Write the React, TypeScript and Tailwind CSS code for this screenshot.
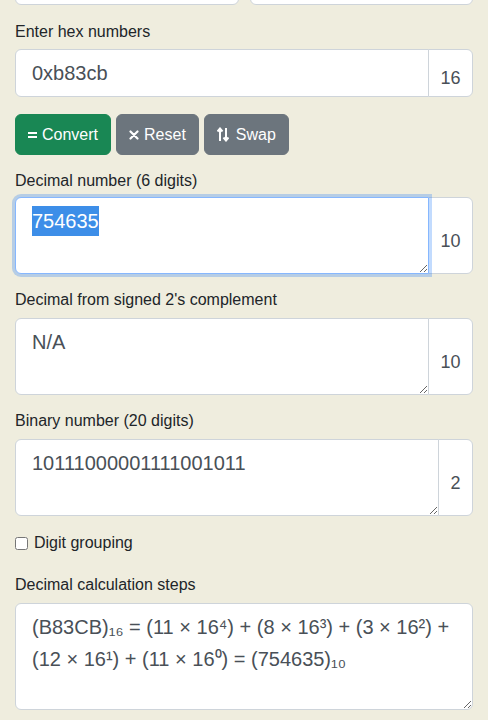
import { useEffect, useRef } from 'react'

const FONT = { fontFamily: '"Liberation Sans", Arial, sans-serif' }

function EqIcon() {
  return (
    <svg width="9" height="10" viewBox="0 0 9 10" className="shrink-0">
      <rect x="0" y="2" width="9" height="2" fill="currentColor" />
      <rect x="0" y="6" width="9" height="2" fill="currentColor" />
    </svg>
  )
}

function XIcon() {
  return (
    <svg width="10" height="10" viewBox="0 0 10 10" className="shrink-0">
      <path d="M1.5 1.5 8.5 8.5 M8.5 1.5 1.5 8.5" stroke="currentColor" strokeWidth="2.2" strokeLinecap="round" />
    </svg>
  )
}

function SwapIcon() {
  return (
    <svg width="12" height="15" viewBox="0 0 12 15" className="shrink-0">
      <path d="M3 14V2 M0.5 4.5 3 1.5 5.5 4.5" stroke="currentColor" strokeWidth="2" fill="none" />
      <path d="M9 1v12 M6.5 10.5 9 13.5 11.5 10.5" stroke="currentColor" strokeWidth="2" fill="none" />
    </svg>
  )
}

function Addon({ children, narrow }: { children: React.ReactNode; narrow?: boolean }) {
  return (
    <div
      className={`flex items-center justify-center pt-[11px] -ml-px bg-white border border-[#ced4da] rounded-r-[6px] text-[18px] text-[#495057] ${
        narrow ? 'w-[35px]' : 'w-[45px]'
      }`}
    >
      {children}
    </div>
  )
}

export default function App() {
  const decRef = useRef<HTMLTextAreaElement>(null)

  useEffect(() => {
    const el = decRef.current
    if (el) {
      el.focus()
      el.setSelectionRange(0, 6)
    }
  }, [])

  const steps =
    '(B83CB)₁₆ = (11 × 16⁴) + (8 × 16³) + (3 × 16²) + (12 × 16¹) + (11 × 16⁰) = (754635)₁₀'

  return (
    <div className="min-h-[720px] bg-[#efedde] px-[15px] pb-4 overflow-hidden" style={FONT}>
      {/* cut-off selects */}
      <div className="flex gap-[11px] -mt-[35px]">
        <div className="flex-1 h-[40px] bg-white border border-[#ced4da] rounded-[6px]" />
        <div className="flex-1 h-[40px] bg-white border border-[#ced4da] rounded-[6px]" />
      </div>

      <label className="block mt-[15px] mb-[5px] text-[16px] leading-6 text-[#212529]">Enter hex numbers</label>
      <div className="flex">
        <input
          readOnly
          value="0xb83cb"
          className="flex-1 min-w-0 h-[48px] px-4 bg-white border border-[#ced4da] rounded-l-[6px] text-[20px] text-[#495057] outline-none"
          style={FONT}
        />
        <Addon>16</Addon>
      </div>

      <div className="flex gap-[5px] mt-[17px]">
        <button className="flex items-center gap-[5px] h-[41px] px-3 rounded-[6px] border border-[#198754] bg-[#198754] text-white text-[16px]">
          <EqIcon />
          Convert
        </button>
        <button className="flex items-center gap-[5px] h-[41px] px-3 rounded-[6px] border border-[#6c757d] bg-[#6c757d] text-white text-[16px]">
          <XIcon />
          Reset
        </button>
        <button className="flex items-center gap-[7px] h-[41px] px-3 rounded-[6px] border border-[#6c757d] bg-[#6c757d] text-white text-[16px]">
          <SwapIcon />
          Swap
        </button>
      </div>

      <label className="block mt-[14px] mb-[4px] text-[16px] leading-6 text-[#212529]">Decimal number (6 digits)</label>
      <div className="flex">
        <textarea
          ref={decRef}
          readOnly
          defaultValue="754635"
          className="relative z-10 flex-1 min-w-0 h-[77px] px-4 pt-[8px] bg-white border border-[#86b7fe] rounded-l-[6px] text-[20px] leading-[30px] text-[#495057] outline-none shadow-[0_0_0_3px_rgba(13,110,253,0.25)] selection:bg-[#3d8ee8] selection:text-white"
          style={FONT}
        />
        <Addon>10</Addon>
      </div>

      <label className="block mt-[14px] mb-[6px] text-[16px] leading-6 text-[#212529]">Decimal from signed 2's complement</label>
      <div className="flex">
        <textarea
          readOnly
          defaultValue="N/A"
          className="flex-1 min-w-0 h-[77px] px-4 pt-[8px] bg-white border border-[#ced4da] rounded-l-[6px] text-[20px] leading-[30px] text-[#495057] outline-none"
          style={FONT}
        />
        <Addon>10</Addon>
      </div>

      <label className="block mt-[14px] mb-[6px] text-[16px] leading-6 text-[#212529]">Binary number (20 digits)</label>
      <div className="flex">
        <textarea
          readOnly
          defaultValue="10111000001111001011"
          className="flex-1 min-w-0 h-[77px] px-4 pt-[8px] bg-white border border-[#ced4da] rounded-l-[6px] text-[20px] leading-[30px] text-[#495057] outline-none"
          style={FONT}
        />
        <Addon narrow>2</Addon>
      </div>

      <label className="flex items-center gap-[6px] mt-[15px] text-[16px] leading-6 text-[#212529]">
        <input type="checkbox" className="m-0 w-[13px] h-[13px]" />
        Digit grouping
      </label>

      <label className="block mt-[18px] mb-[6px] text-[16px] leading-6 text-[#212529]">Decimal calculation steps</label>
      <textarea
        readOnly
        defaultValue={steps}
        className="block w-full h-[107px] px-4 pt-[7px] bg-white border border-[#ced4da] rounded-[6px] text-[20px] leading-[32px] text-[#495057] outline-none"
        style={FONT}
      />
    </div>
  )
}
